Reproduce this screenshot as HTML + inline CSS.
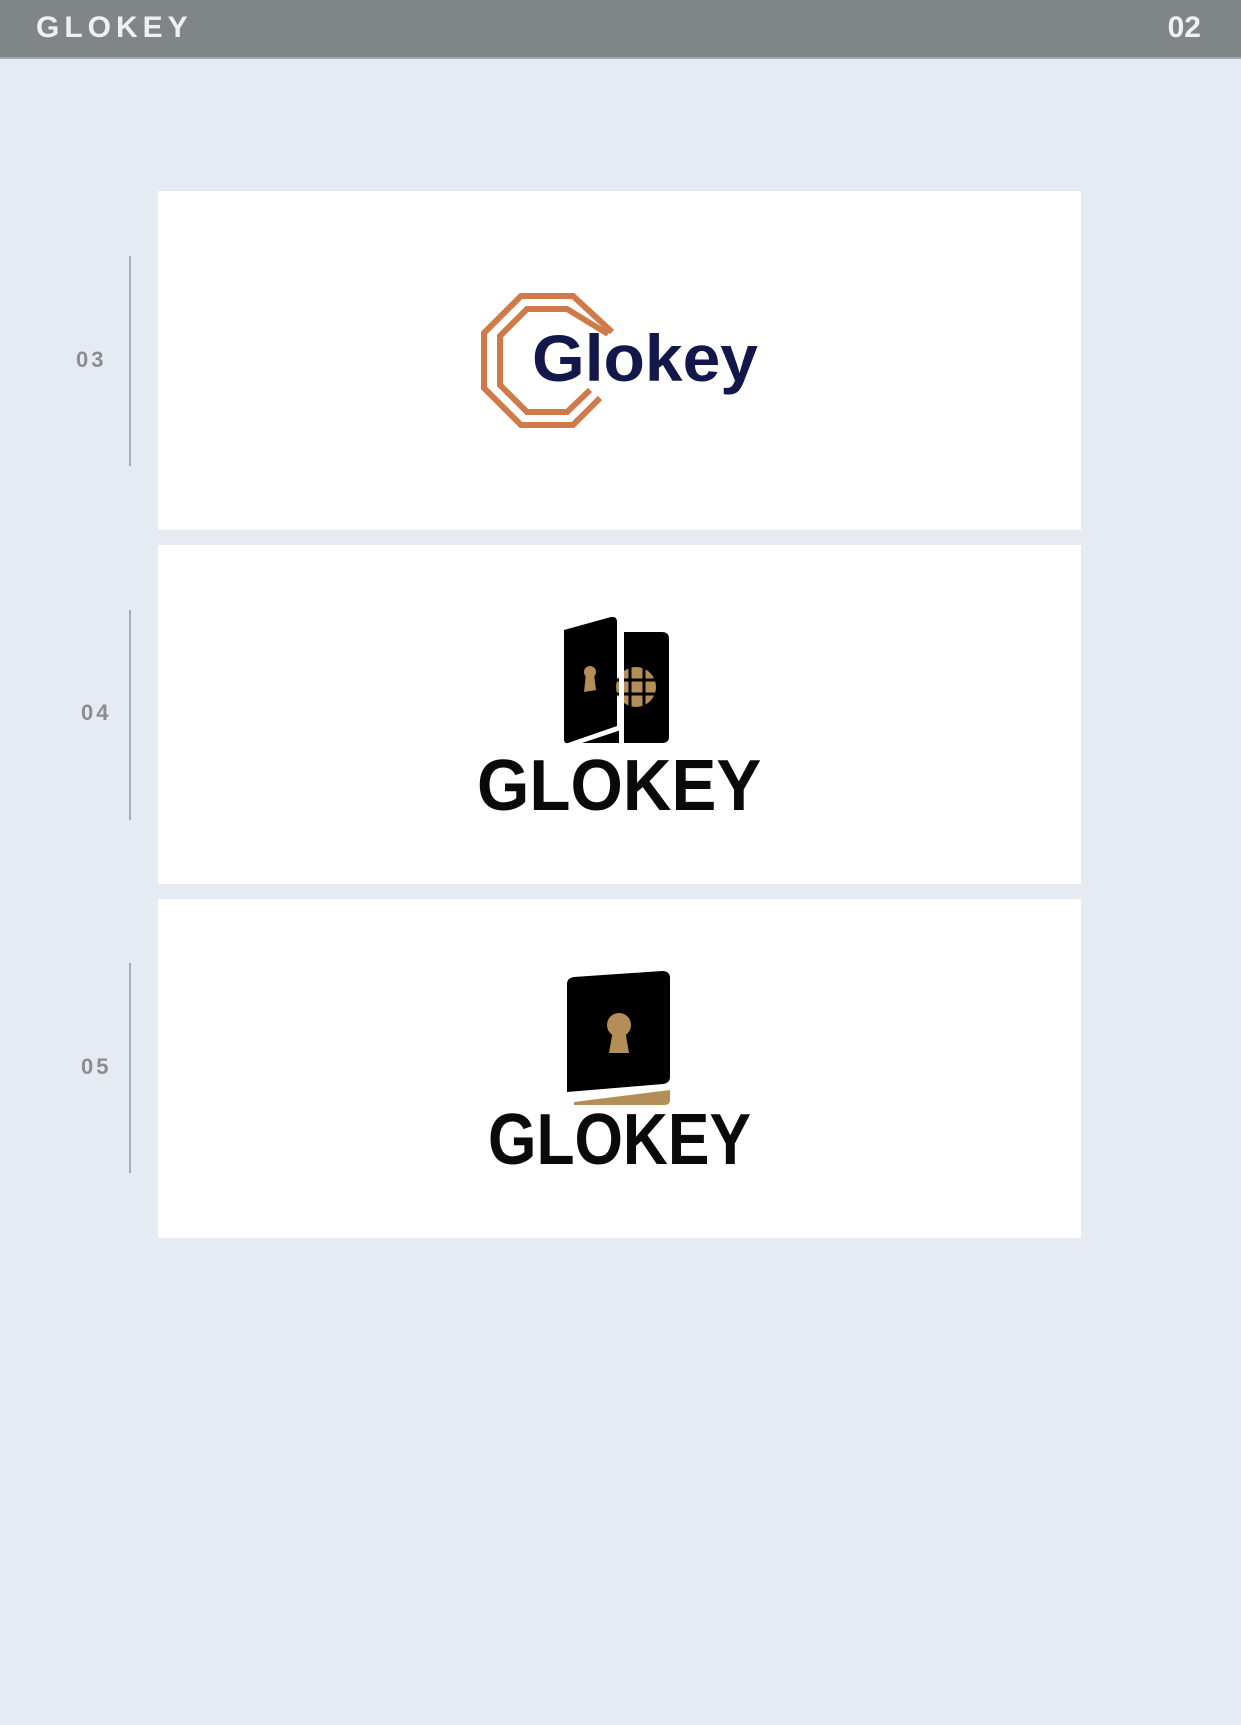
<!DOCTYPE html>
<html><head><style>
body{margin:0;width:1241px;height:1725px;background:#e6eaf2;position:relative;overflow:hidden;font-family:"Liberation Sans",sans-serif}
.hdr{position:absolute;left:0;top:0;width:1241px;height:57px;background:#808688;border-bottom:2px solid #a6abb0}
.hdr .t{position:absolute;left:36px;top:11px;font-size:30px;font-weight:bold;letter-spacing:5px;color:#eef0f3}
.hdr .n{position:absolute;right:40px;top:11px;font-size:30px;font-weight:bold;color:#eef0f3}
.card{position:absolute;left:158px;width:923px;height:339px;background:#fff}
.line{position:absolute;left:129px;width:2px;height:210px;background:#a9adb3}
.lab{position:absolute;font-size:22px;font-weight:bold;color:#8a8e91;letter-spacing:3px}
.big{position:absolute;font-weight:bold;color:#0a0a0a;font-size:72px;transform-origin:left top;white-space:nowrap}
</style></head><body>
<div class="hdr"><div class="t">GLOKEY</div><div class="n">02</div></div>

<div class="card" style="top:191px"></div>
<div class="card" style="top:545px"></div>
<div class="card" style="top:899px"></div>

<div class="line" style="top:256px"></div>
<div class="line" style="top:610px"></div>
<div class="line" style="top:963px"></div>
<div class="lab" style="left:76px;top:347px">03</div>
<div class="lab" style="left:81px;top:700px">04</div>
<div class="lab" style="left:81px;top:1054px">05</div>

<svg style="position:absolute;left:0;top:0" width="1241" height="1725">
  <g fill="none" stroke="#cf7a48" stroke-width="6">
    <polyline points="612,332 573,296 521,296 484,333 484,388 521,425 573,425 600,398"/>
    <polyline points="608,334 567,309 527,309 500,336 500,385 527,412 567,412 590,390"/>
  </g>
  <path d="M564,630 L611,617 Q617,616 617,622 L617,726 L568,743 Q564,744 564,739 Z" fill="#000"/>
  <path d="M624,632 L662,632 Q669,632 669,639 L669,737 Q669,743 662,743 L582,743 L624,729 Z" fill="#000"/>
  <circle cx="636" cy="687" r="20" fill="#b38e56"/>
  <g stroke="#000" stroke-width="3"><line x1="616" y1="680" x2="656" y2="680"/><line x1="616" y1="694" x2="656" y2="694"/><line x1="630" y1="666" x2="630" y2="708"/><line x1="644" y1="666" x2="644" y2="708"/></g>
  <rect x="619" y="628" width="5" height="118" fill="#fff"/>
  <circle cx="590" cy="672" r="6" fill="#b38e56"/><path d="M586,674 L594,674 L596,690 L584,692 Z" fill="#b38e56"/>
  <path d="M567,984 Q567,978 574,977 L662,971 Q670,971 670,978 L670,1077 Q670,1083 663,1084 L567,1092 Z" fill="#000"/>
  <path d="M574,1102 L670,1090 L670,1100 Q670,1105 664,1105 L574,1105 Z" fill="#b38e56"/>
  <circle cx="619" cy="1025" r="12" fill="#b38e56"/><path d="M613,1030 L625,1030 L629,1053 L609,1053 Z" fill="#b38e56"/>
  <text x="532" y="381" font-family="Liberation Sans,sans-serif" font-weight="bold" font-size="66" fill="#14174a" textLength="226" lengthAdjust="spacingAndGlyphs">Glokey</text>
</svg>
<div class="big" style="left:477px;top:745px;transform:scaleX(0.935)">GLOKEY</div>
<div class="big" style="left:488px;top:1099px;transform:scaleX(0.865)">GLOKEY</div>
</body></html>
